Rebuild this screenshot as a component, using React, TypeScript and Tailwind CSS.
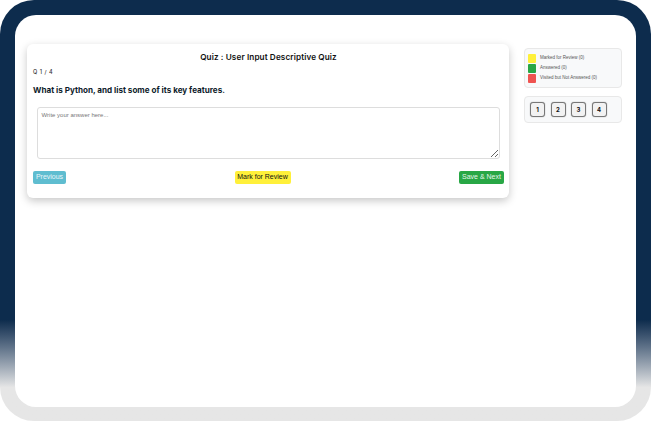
import { useState } from "react"

const legend = [
  { color: "bg-[#fff03a]", label: "Marked for Review (0)" },
  { color: "bg-[#28a745]", label: "Answered (0)" },
  { color: "bg-[#ef5350]", label: "Visited but Not Answered (0)" },
]

function App() {
  const [answer, setAnswer] = useState("")

  return (
    <div className="h-[421px] w-[651px] overflow-hidden bg-white font-['Inter',sans-serif]">
      <div className="h-full w-full rounded-[34px] bg-linear-to-b from-[#0d2c4d] from-[76%] to-[#e6e6e6] to-[92%] pt-[15px] pr-[15px] pb-[14px] pl-[15px]">
        <div className="flex h-full w-full items-start rounded-[21px] bg-white pt-[29px] pl-[12px]">
          <main className="h-[154px] w-[482px] rounded-[6px] bg-white pt-[8px] pr-[5px] pl-[6px] shadow-[0_3px_8px_rgba(0,0,0,0.22)]">
            <h1 className="text-center text-[8.2px] leading-[11px] font-semibold tracking-[0.1px] text-[#111]">
              Quiz : User Input Descriptive Quiz
            </h1>
            <p className="mt-[5px] text-[5.5px] leading-[8px] font-medium tracking-[0.5px] text-[#333]">Q 1 / 4</p>
            <h2 className="mt-[8px] text-[8.1px] leading-[13px] font-bold text-[#0d1b2a]">
              What is Python, and list some of its key features.
            </h2>
            <textarea
              value={answer}
              onChange={(e) => setAnswer(e.target.value)}
              placeholder="Write your answer here..."
              className="mt-[10px] ml-[3.5px] block h-[52px] w-[463px] rounded-[3px] border border-[#ddd] px-[4px] py-[3px] font-['Liberation_Sans',sans-serif] text-[6px] leading-[8px] outline-none placeholder:text-[#777]"
            />
            <div className="mt-[12px] flex items-center justify-between font-['Liberation_Sans',sans-serif]">
              <button className="flex h-[13px] w-[33px] items-center justify-center rounded-[2px] bg-[#5fbdd0] text-[7px] text-[#e8f6f9]">
                Previous
              </button>
              <button className="flex h-[13px] w-[56px] items-center justify-center rounded-[2px] bg-[#fff03a] text-[7px] text-[#111]">
                Mark for Review
              </button>
              <button className="flex h-[13px] w-[45px] items-center justify-center rounded-[2px] bg-[#28a745] text-[7px] text-[#e6f6ea]">
                Save &amp; Next
              </button>
            </div>
          </main>

          <aside className="ml-[15px] flex w-[98px] flex-col gap-[8px] pt-[4px]">
            <div className="flex h-[40px] flex-col justify-center rounded-[4px] border border-[#e8e8e8] bg-[#f8f9fa] pl-[3px] font-['Liberation_Sans',sans-serif]">
              {legend.map((item) => (
                <div key={item.label} className="flex h-[10px] items-center gap-[4px]">
                  <span className={`h-[9px] w-[8px] rounded-[1px] ${item.color}`} />
                  <span className="text-[4.5px] leading-[6px] whitespace-nowrap text-[#555]">{item.label}</span>
                </div>
              ))}
            </div>
            <div className="flex h-[27px] items-center gap-[5.5px] rounded-[4px] border border-[#e8e8e8] bg-[#f8f9fa] pl-[5px]">
              {[1, 2, 3, 4].map((n) => (
                <button
                  key={n}
                  className="flex h-[15px] w-[15px] items-center justify-center rounded-[3px] border border-[#777] bg-[#f2f2f2] text-[6px] font-bold text-[#111] shadow-[0_0_1px_rgba(0,0,0,0.5)]"
                >
                  {n}
                </button>
              ))}
            </div>
          </aside>
        </div>
      </div>
    </div>
  )
}

export default App
